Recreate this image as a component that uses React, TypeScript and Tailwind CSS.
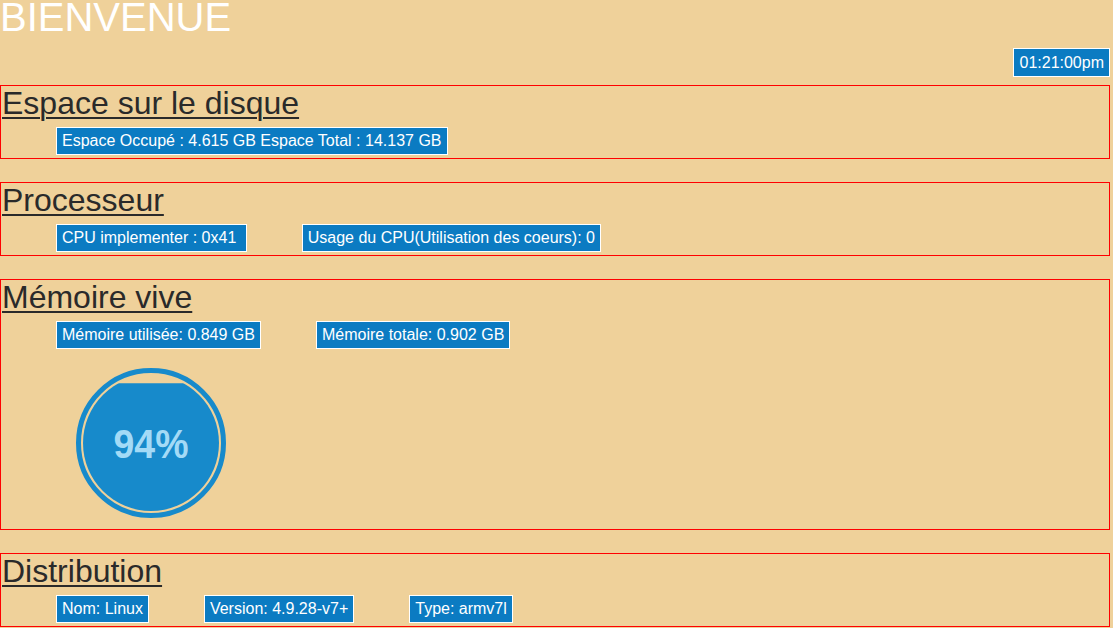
import React from "react";

const badge =
  "inline-block whitespace-pre border border-white bg-[#0b7bc2] px-[5px] py-[4px] text-[16px] leading-[18px] text-white";

function Section({ title, children }: { title: string; children: React.ReactNode }) {
  return (
    <section className="border border-[#ff0000]">
      <h2 className="pl-[1px] text-[32px] leading-[34px] text-[#2a2a2a] underline decoration-2 underline-offset-[3px]">
        {title}
      </h2>
      {children}
    </section>
  );
}

function Row({ items }: { items: string[] }) {
  return (
    <div className="mt-[7px] mb-[3px] flex gap-[55px] pl-[55px]">
      {items.map((t) => (
        <span key={t} className={badge}>
          {t}
        </span>
      ))}
    </div>
  );
}

function Gauge({ value }: { value: number }) {
  const cx = 76;
  const cy = 76;
  const r = 68;
  const top = cy + r - (2 * r * value) / 100;
  return (
    <svg width="152" height="152" viewBox="0 0 152 152" className="block">
      <defs>
        <clipPath id="fill">
          <rect x="0" y={top} width="152" height="152" />
        </clipPath>
      </defs>
      <circle cx={cx} cy={cy} r="72.5" fill="none" stroke="#178acb" strokeWidth="5" />
      <circle cx={cx} cy={cy} r={r} fill="#178acb" clipPath="url(#fill)" />
      <text
        x={cx}
        y={cy + 15}
        textAnchor="middle"
        fill="#a3daf6"
        fontFamily="'Liberation Sans', Arial, sans-serif"
        fontWeight="bold"
        fontSize="40"
        textLength="75"
        lengthAdjust="spacingAndGlyphs"
      >
        {value}%
      </text>
    </svg>
  );
}

export default function App() {
  return (
    <div className="min-h-[628px] w-[1113px] overflow-hidden bg-[#efd19a] font-['Liberation_Sans',Arial,sans-serif]">
      <div className="w-[1110px]">
        <h1 className="text-[40px] leading-[34px] text-white">BIENVENUE</h1>
        <div className="mt-[14px] flex justify-end">
          <span className="inline-block border border-white bg-[#0b7bc2] px-[5px] py-[4px] text-[16px] leading-[19px] text-white">
            01:21:00pm
          </span>
        </div>
        <div className="mt-[8px] flex flex-col gap-[23px]">
          <Section title="Espace sur le disque">
            <Row items={["Espace Occupé : 4.615 GB Espace Total : 14.137 GB"]} />
          </Section>
          <Section title="Processeur">
            <Row items={["CPU implementer : 0x41 ", "Usage du CPU(Utilisation des coeurs): 0"]} />
          </Section>
          <Section title="Mémoire vive">
            <Row items={["Mémoire utilisée: 0.849 GB", "Mémoire totale: 0.902 GB"]} />
            <div className="mt-[18px] mb-[10px] pl-[74px]">
              <Gauge value={94} />
            </div>
          </Section>
          <Section title="Distribution">
            <Row items={["Nom: Linux", "Version: 4.9.28-v7+", "Type: armv7l"]} />
          </Section>
        </div>
      </div>
    </div>
  );
}
